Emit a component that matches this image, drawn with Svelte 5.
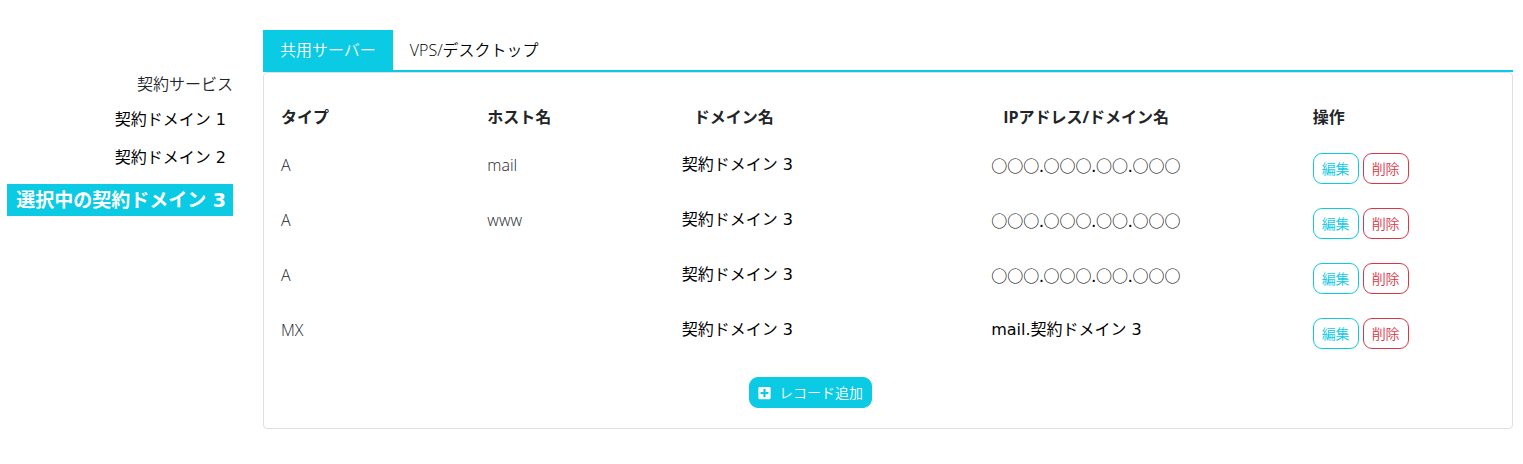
<script>
  const domains = ['契約ドメイン 1', '契約ドメイン 2'];
  const address = '○○○.○○○.○○.○○○';
  const records = [
    { type: 'A', host: 'mail', domain: '契約ドメイン 3', value: address },
    { type: 'A', host: 'www', domain: '契約ドメイン 3', value: address },
    { type: 'A', host: '', domain: '契約ドメイン 3', value: address },
    { type: 'MX', host: '', domain: '契約ドメイン 3', value: 'mail.契約ドメイン 3' }
  ];
</script>

<div class="page">
  <aside>
    <h2>契約サービス</h2>
    <nav aria-label="契約サービス">
      {#each domains as domain}
        <a href="#domain">{domain}</a>
      {/each}
      <a href="#domain" class="current" aria-current="page">選択中の契約ドメイン 3</a>
    </nav>
  </aside>

  <main>
    <div class="tabs" role="tablist">
      <button type="button" role="tab" class="tab active" aria-selected="true">共用サーバー</button>
      <button type="button" role="tab" class="tab" aria-selected="false">VPS/デスクトップ</button>
    </div>

    <section class="card">
      <table>
        <thead>
          <tr>
            <th class="narrow">タイプ</th>
            <th class="narrow">ホスト名</th>
            <th class="wide">ドメイン名</th>
            <th class="wide">IPアドレス/ドメイン名</th>
            <th class="narrow">操作</th>
          </tr>
        </thead>
        <tbody>
          {#each records as record}
            <tr>
              <td>{record.type}</td>
              <td>{record.host}</td>
              <td class="value">{record.domain}</td>
              <td class="value" class:address={record.type === 'A'}>{record.value}</td>
              <td>
                <div class="actions">
                  <button type="button" class="btn edit">編集</button>
                  <button type="button" class="btn delete">削除</button>
                </div>
              </td>
            </tr>
          {/each}
        </tbody>
      </table>
      <button type="button" class="btn add">
        <svg viewBox="0 0 448 512" width="13" height="14" aria-hidden="true">
          <path
            fill="currentColor"
            d="M400 32H48C21.500 32 0 53.500 0 80v352c0 26.500 21.500 48 48 48h352c26.500 0 48-21.500 48-48V80c0-26.500-21.500-48-48-48zm-32 252c0 6.600-5.400 12-12 12h-92v92c0 6.600-5.400 12-12 12h-56c-6.600 0-12-5.400-12-12v-92H92c-6.600 0-12-5.400-12-12v-56c0-6.600 5.400-12 12-12h92v-92c0-6.600 5.400-12 12-12h56c6.600 0 12 5.400 12 12v92h92c6.600 0 12 5.400 12 12v56z"
          />
        </svg>
        <span>レコード追加</span>
      </button>
    </section>
  </main>
</div>

<style>
  :global(body) {
    background: #fff;
  }

  .page {
    --accent: #0acae4;
    display: grid;
    grid-template-columns: 226px minmax(0, 1fr);
    column-gap: 30px;
    padding: 30px 10px 35px 7px;
    color: #212529;
    font-family: 'Open Sans', 'Noto Sans CJK JP', sans-serif;
    font-size: 16px;
    font-weight: 350;
    line-height: 24px;
  }

  aside {
    padding-top: 42px;
    text-align: right;
  }

  h2 {
    margin: 0;
    font-size: 16px;
    font-weight: inherit;
  }

  nav {
    display: flex;
    flex-direction: column;
    gap: 14px;
    padding-top: 12px;
    font-family: 'DejaVu Sans', 'Noto Sans CJK JP', sans-serif;
    font-weight: 400;
  }

  nav a {
    padding: 0 7px;
    color: #000;
    text-decoration: none;
    white-space: nowrap;
  }

  nav .current {
    padding: 4px 7px;
    background: var(--accent);
    color: #fff;
    font-size: 19px;
    font-weight: 700;
  }

  button {
    font: inherit;
    cursor: pointer;
  }

  .tabs {
    display: flex;
    border-bottom: 2px solid var(--accent);
  }

  .tab {
    padding: 8px 17px;
    border: 0;
    background: none;
    color: #000;
  }

  .tab.active {
    background: var(--accent);
    color: #fff;
  }

  .card {
    display: flex;
    flex-direction: column;
    align-items: center;
    gap: 16px;
    padding: 20px 5px;
    border: 1px solid #dfdfdf;
    border-radius: 4px;
  }

  table {
    width: 100%;
    table-layout: fixed;
    border-collapse: collapse;
  }

  th,
  td {
    box-sizing: border-box;
    padding: 12px;
    text-align: left;
    vertical-align: top;
  }

  th {
    font-weight: 700;
  }

  .narrow {
    width: 16.6667%;
  }

  .wide {
    width: 25%;
  }

  .value {
    padding-left: 0;
    color: #000;
    font-family: 'DejaVu Sans', 'Noto Sans CJK JP', sans-serif;
    font-weight: 400;
  }

  .address {
    font-family: 'Noto Sans CJK JP', sans-serif;
  }

  .actions {
    display: flex;
    gap: 4px;
  }

  .btn {
    display: flex;
    align-items: center;
    gap: 8px;
    padding: 4px 8px;
    border: 1px solid currentColor;
    border-radius: 9px;
    background: #fff;
    font-size: 14px;
    line-height: 21px;
  }

  .edit {
    color: var(--accent);
  }

  .delete {
    color: #dc3545;
  }

  .add {
    margin-right: 12.5%;
    border-color: var(--accent);
    background: var(--accent);
    color: #fff;
  }
</style>
